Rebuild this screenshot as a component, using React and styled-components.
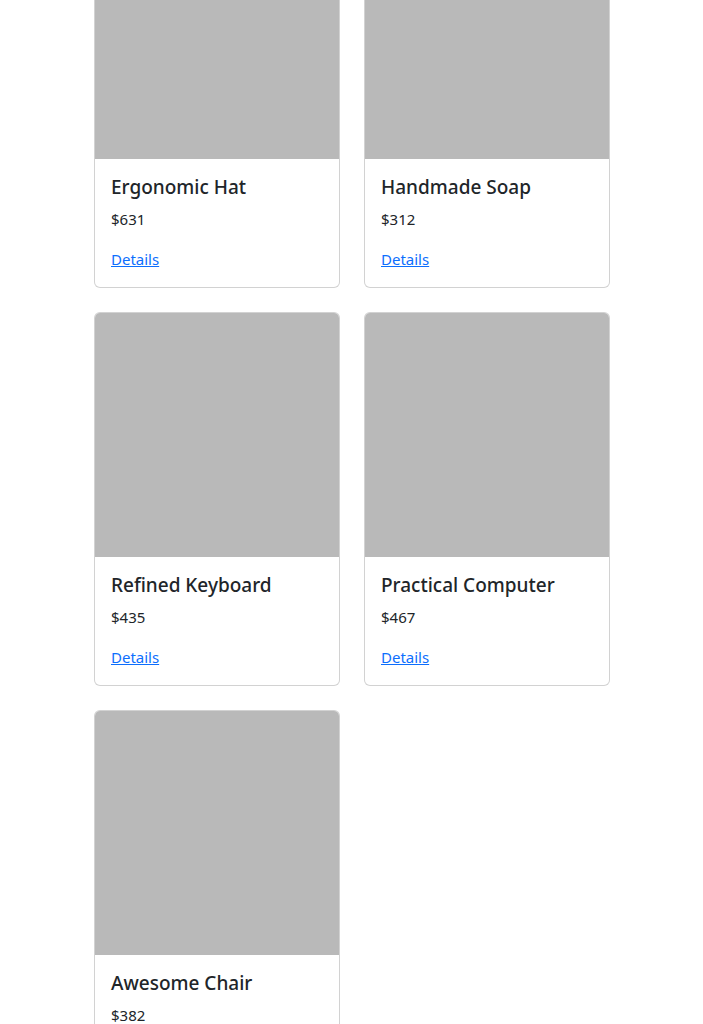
import styled, { createGlobalStyle } from "styled-components";

const products = [
  { id: 1, name: "Ergonomic Hat", price: 631 },
  { id: 2, name: "Handmade Soap", price: 312 },
  { id: 3, name: "Refined Keyboard", price: 435 },
  { id: 4, name: "Practical Computer", price: 467 },
  { id: 5, name: "Awesome Chair", price: 382 },
];

const GlobalStyle = createGlobalStyle`
  body {
    margin: 0;
    background: #fff;
    color: #212529;
    font-family: "Noto Sans", "Open Sans", sans-serif;
    font-size: 16px;
    line-height: 1.5;
    overflow: hidden;
  }
`;

const App = () => {
  return (
    <>
      <GlobalStyle />
      <Container>
        <Grid>
          {products.map((p) => (
            <Card key={p.id}>
              <Thumb />
              <Body>
                <Title>{p.name}</Title>
                <Price>${p.price}</Price>
                <DetailsLink href="#">Details</DetailsLink>
              </Body>
            </Card>
          ))}
        </Grid>
      </Container>
    </>
  );
};

const Container = styled.div`
  width: 516px;
  margin: 0 auto;
  padding-left: 1px;
`;

const Grid = styled.div`
  display: grid;
  grid-template-columns: repeat(2, 246px);
  column-gap: 24px;
  row-gap: 24px;
  margin-top: -86px;
`;

const Card = styled.div`
  display: flex;
  flex-direction: column;
  border: 1px solid rgba(0, 0, 0, 0.175);
  border-radius: 6px;
  overflow: hidden;
  background: #fff;
`;

const Thumb = styled.div`
  height: 244px;
  background: #b9b9b9;
`;

const Body = styled.div`
  padding: 16px;
`;

const Title = styled.h5`
  margin: 0 0 8px;
  font-size: 19px;
  font-weight: 500;
  line-height: 24px;
  color: #212529;
`;

const Price = styled.p`
  margin: 0 0 16px;
  font-size: 15px;
  line-height: 24px;
`;

const DetailsLink = styled.a`
  display: inline-block;
  color: #0d6efd;
  font-size: 15px;
  line-height: 24px;
  text-decoration: underline;
`;

export default App;
